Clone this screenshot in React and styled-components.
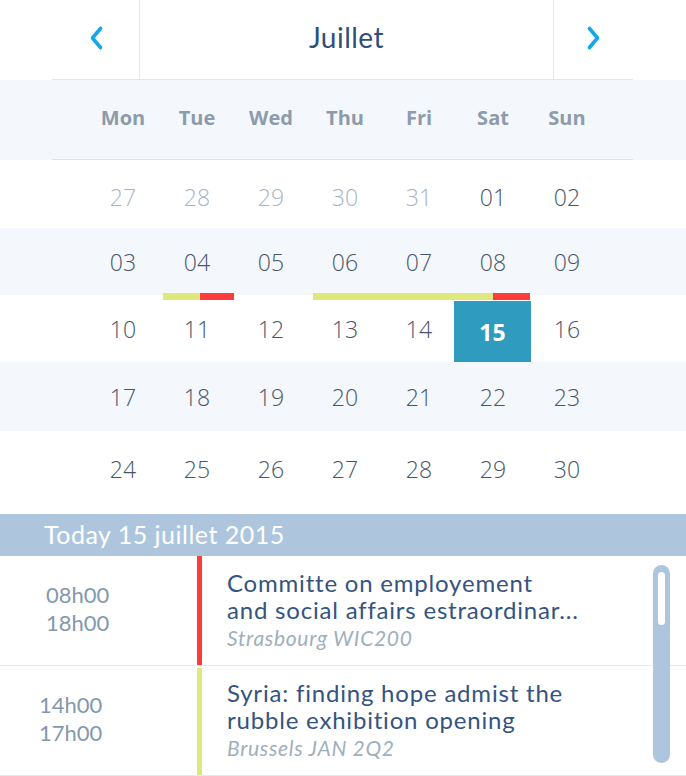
import React from 'react';
import styled, { createGlobalStyle } from 'styled-components';

const GlobalStyle = createGlobalStyle`
  html, body {
    margin: 0;
    padding: 0;
    background: #fff;
    font-family: "Open Sans", "Noto Sans", sans-serif;
  }
`;

const Page = styled.div`
  width: 686px;
  height: 776px;
  overflow: hidden;
  background: #fff;
`;

const NavBar = styled.div`
  display: flex;
  height: 79px;
  margin: 0 53px 0 52px;
  border-bottom: 1px solid #e4e7eb;
`;

const NavButton = styled.button`
  width: ${(p) => p.$width}px;
  border: none;
  background: none;
  padding: 0 0 3px;
  display: flex;
  align-items: center;
  justify-content: center;
  ${(p) => (p.$side === 'left' ? 'border-right' : 'border-left')}: 1px solid #e4e7eb;
  cursor: pointer;
`;

const MonthTitle = styled.div`
  flex: 1;
  display: flex;
  align-items: center;
  justify-content: center;
  font-family: "Lato", "Open Sans", sans-serif;
  font-size: 28px;
  letter-spacing: 0.5px;
  color: #2f4e7a;
  padding-bottom: 5px;
`;

const WeekBand = styled.div`
  background: #f4f7fb;
`;

const WeekInner = styled.div`
  height: 80px;
  margin: 0 53px 0 52px;
  border-bottom: 1px solid #dfe3e8;
  display: flex;
  align-items: center;
  padding-bottom: 4px;
  box-sizing: border-box;
`;

const Grid = styled.div`
  display: grid;
  grid-template-columns: repeat(7, 74px);
  margin-left: 34px;
`;

const WeekDay = styled.div`
  text-align: center;
  font-size: 20px;
  font-weight: 700;
  color: #8d9bab;
`;

const Weeks = styled.div`
  padding-bottom: 7px;
`;

const WeekRow = styled.div`
  position: relative;
  height: ${(p) => p.$height}px;
  background: ${(p) => (p.$shaded ? '#f4f7fb' : '#fff')};
`;

const DayGrid = styled.div`
  display: grid;
  grid-template-columns: repeat(7, 74px);
  margin-left: 86px;
  height: 100%;
`;

const Day = styled.div`
  display: flex;
  align-items: center;
  justify-content: center;
  font-size: 23px;
  font-weight: ${(p) => (p.$today ? 700 : 300)};
  color: ${(p) => (p.$today ? '#fff' : p.$muted ? '#a6b4c4' : '#46556a')};
  background: ${(p) => (p.$today ? '#2e9bbf' : 'transparent')};
  margin: ${(p) => (p.$today ? '6px -1px 0 -2px' : '0')};
  padding-top: ${(p) => (p.$today ? 0 : p.$lift)}px;
`;

const EventBar = styled.div`
  position: absolute;
  top: -2px;
  height: 7px;
  display: flex;
`;

const BarPart = styled.div`
  height: 100%;
  background: ${(p) => (p.$kind === 'red' ? '#ff3b3b' : '#dfe87a')};
`;

const TodayBand = styled.div`
  height: 42px;
  background: #adc6de;
  color: #fff;
  font-family: "Lato", "Open Sans", sans-serif;
  font-size: 25px;
  letter-spacing: 0.5px;
  display: flex;
  align-items: center;
  padding-left: 44px;
  padding-bottom: 3px;
  box-sizing: border-box;
`;

const EventList = styled.div`
  position: relative;
`;

const EventRow = styled.div`
  display: flex;
  height: 109px;
  border-bottom: 1px solid #e6e8ea;
`;

const TimeCol = styled.div`
  width: 197px;
  display: flex;
  flex-direction: column;
  justify-content: center;
  padding-left: ${(p) => p.$indent}px;
  box-sizing: border-box;
  font-family: "Lato", "Open Sans", sans-serif;
  font-size: 22px;
  line-height: 28px;
  color: #8399ab;
  padding-bottom: 4px;
`;

const Stripe = styled.div`
  width: 5px;
  margin-top: ${(p) => (p.$first ? 0 : 2)}px;
  background: ${(p) => p.$color};
`;

const Details = styled.div`
  flex: 1;
  display: flex;
  flex-direction: column;
  justify-content: center;
  padding-left: 25px;
  font-family: "Lato", "Open Sans", sans-serif;
`;

const EventTitle = styled.div`
  font-size: 24px;
  line-height: 27px;
  letter-spacing: 0.8px;
  color: #34547f;
`;

const EventPlace = styled.div`
  font-size: 21px;
  line-height: 29px;
  letter-spacing: 0.7px;
  font-style: italic;
  color: #9eafbe;
`;

const ScrollTrack = styled.div`
  position: absolute;
  left: 653px;
  top: 9px;
  width: 17px;
  height: 198px;
  border-radius: 9px;
  background: #adc6de;
`;

const ScrollThumb = styled.div`
  margin: 7px auto 0;
  width: 7px;
  height: 53px;
  border-radius: 4px;
  background: #fff;
`;

const Chevron = ({ dir }) => (
  <svg width="16" height="26" viewBox="0 0 16 26">
    <path
      d={dir === 'left' ? 'M12.5 3.5 L4.5 13 L12.5 22.5' : 'M3.5 3.5 L11.5 13 L3.5 22.5'}
      fill="none"
      stroke="#13a8ec"
      strokeWidth="3.6"
      strokeLinecap="round"
      strokeLinejoin="round"
    />
  </svg>
);

const weekDays = ['Mon', 'Tue', 'Wed', 'Thu', 'Fri', 'Sat', 'Sun'];

const weeks = [
  { height: 68, lift: 5, days: ['27', '28', '29', '30', '31', '01', '02'] },
  { height: 67, lift: 0, days: ['03', '04', '05', '06', '07', '08', '09'] },
  { height: 67, lift: 0, days: ['10', '11', '12', '13', '14', '15', '16'] },
  { height: 69, lift: 0, days: ['17', '18', '19', '20', '21', '22', '23'] },
  { height: 76, lift: 0, days: ['24', '25', '26', '27', '28', '29', '30'] },
];

// bars drawn at the top of the row, in px from the page left
const bars = {
  2: [
    { left: 163, parts: [['yellow', 37], ['red', 34]] },
    { left: 313, parts: [['yellow', 180], ['red', 37]] },
  ],
};

const events = [
  {
    start: '08h00',
    end: '18h00',
    indent: 46,
    color: '#ff3b3b',
    title: ['Committe on employement', 'and social affairs estraordinar...'],
    place: 'Strasbourg WIC200',
  },
  {
    start: '14h00',
    end: '17h00',
    indent: 39,
    color: '#dfe87a',
    title: ['Syria: finding hope admist the', 'rubble exhibition opening'],
    place: 'Brussels JAN 2Q2',
  },
];

function App() {
  return (
    <Page>
      <GlobalStyle />
      <NavBar>
        <NavButton $side="left" $width={88}>
          <Chevron dir="left" />
        </NavButton>
        <MonthTitle>Juillet</MonthTitle>
        <NavButton $side="right" $width={80}>
          <Chevron dir="right" />
        </NavButton>
      </NavBar>

      <WeekBand>
        <WeekInner>
          <Grid>
            {weekDays.map((d) => (
              <WeekDay key={d}>{d}</WeekDay>
            ))}
          </Grid>
        </WeekInner>
      </WeekBand>

      <Weeks>
        {weeks.map((week, i) => (
          <WeekRow key={i} $shaded={i % 2 === 1} $height={week.height}>
            {(bars[i] || []).map((b, j) => (
              <EventBar key={j} style={{ left: b.left }}>
                {b.parts.map(([kind, w], k) => (
                  <BarPart key={k} $kind={kind} style={{ width: w }} />
                ))}
              </EventBar>
            ))}
            <DayGrid>
              {week.days.map((d, k) => (
                <Day
                  key={k}
                  $lift={week.lift}
                  $muted={i === 0 && k < 5}
                  $today={i === 2 && d === '15'}
                >
                  {d}
                </Day>
              ))}
            </DayGrid>
          </WeekRow>
        ))}
      </Weeks>

      <TodayBand>Today 15 juillet 2015</TodayBand>

      <EventList>
        {events.map((ev, i) => (
          <EventRow key={i}>
            <TimeCol $indent={ev.indent}>
              <div>{ev.start}</div>
              <div>{ev.end}</div>
            </TimeCol>
            <Stripe $color={ev.color} $first={i === 0} />
            <Details>
              {ev.title.map((line) => (
                <EventTitle key={line}>{line}</EventTitle>
              ))}
              <EventPlace>{ev.place}</EventPlace>
            </Details>
          </EventRow>
        ))}
        <ScrollTrack>
          <ScrollThumb />
        </ScrollTrack>
      </EventList>
    </Page>
  );
}

export default App;
